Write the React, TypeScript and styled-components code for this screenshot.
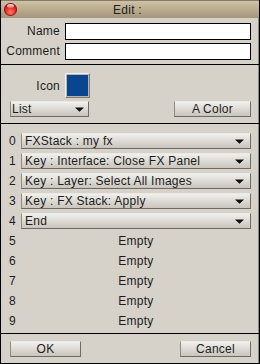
import React from "react";
import styled, { createGlobalStyle } from "styled-components";

const Global = createGlobalStyle`
  html, body { margin: 0; padding: 0; background: #d6d2ca; }
  * { box-sizing: border-box; }
`;

const Window = styled.div`
  width: 260px;
  height: 364px;
  background: #d6d2ca;
  border: 1px solid #000;
  border-top: none;
  box-shadow: inset -1px 0 0 #8f8b84;
  display: flex;
  flex-direction: column;
  font-family: "Liberation Sans", Arial, sans-serif;
  font-size: 12px;
  letter-spacing: 0.25px;
  color: #1c1c1c;
  overflow: hidden;
`;

const TitleBar = styled.div`
  height: 18px;
  flex: none;
  position: relative;
  display: flex;
  align-items: center;
  justify-content: center;
  padding-right: 5px;
  background: linear-gradient(#cfc1a4, #a5967b);
  border-top: 1px solid #85796a;
  color: #222;
  line-height: 16px;
`;

const CloseDot = styled.span`
  position: absolute;
  left: 3px;
  top: 2px;
  width: 13px;
  height: 13px;
  border-radius: 50%;
  background: radial-gradient(circle at 50% 70%, #ff7a6e 0%, #e42a22 45%, #9c1410 100%);
  box-shadow: inset 0 0 0 1px rgba(90, 10, 8, 0.6);
  &::after {
    content: "";
    position: absolute;
    left: 3px;
    top: 1px;
    width: 7px;
    height: 4px;
    border-radius: 50%;
    background: linear-gradient(rgba(255, 255, 255, 0.95), rgba(255, 255, 255, 0.2));
  }
`;

const Section = styled.div<{ $pt: number; $pb: number; $pl: number; $last?: boolean }>`
  flex: none;
  padding: ${(p) => p.$pt}px 8px ${(p) => p.$pb}px ${(p) => p.$pl}px;
  border-bottom: ${(p) => (p.$last ? "none" : "1px solid #000")};
`;

const FormGrid = styled.div`
  display: grid;
  grid-template-columns: 55px 1fr;
  column-gap: 5px;
  row-gap: 3px;
  align-items: center;
`;

const Label = styled.label`
  text-align: right;
  white-space: nowrap;
  line-height: 17px;
`;

const TextField = styled.div`
  height: 17px;
  background: #fff;
  border: 1px solid #000;
`;

const IconRow = styled.div`
  display: flex;
  align-items: center;
  gap: 5px;
  margin-bottom: 3px;
`;

const IconLabel = styled.span`
  width: 50px;
  text-align: right;
`;

const Swatch = styled.div`
  width: 25px;
  height: 25px;
  background: #0a458f;
  border: 1px solid;
  border-color: #f4f3f0 #7d7a74 #7d7a74 #f4f3f0;
  box-shadow: inset 0 0 0 1px #b9b6b0;
`;

const ButtonRow = styled.div`
  display: flex;
  justify-content: space-between;
  align-items: center;
`;

const Bevel = styled.div<{ $w?: number }>`
  height: 16px;
  ${(p) => (p.$w ? `width: ${p.$w}px;` : "")}
  background: linear-gradient(#f0efeb, #c9c5bd);
  border: 1px solid;
  border-color: #ebe9e4 #6e6b66 #6e6b66 #8e8b85;
  line-height: 14px;
  white-space: nowrap;
`;

const Button = styled(Bevel)`
  text-align: center;
`;

const Select = styled(Bevel)<{ $pl: number; $pr: number }>`
  display: flex;
  align-items: center;
  justify-content: space-between;
  padding: 0 ${(p) => p.$pr}px 0 ${(p) => p.$pl}px;
`;

const ListGrid = styled.div`
  display: grid;
  grid-template-columns: 12px 1fr;
  grid-auto-rows: 16px;
  row-gap: 4px;
  align-items: center;
`;

const Index = styled.span`
  line-height: 16px;
`;

const Empty = styled.span`
  text-align: center;
  line-height: 16px;
`;

const Arrow = () => (
  <svg width="9" height="5" viewBox="0 0 9 5">
    <polygon points="0,0.5 9,0.5 4.5,4.8" fill="#111" />
  </svg>
);

const actions = [
  "FXStack : my fx",
  "Key : Interface: Close FX Panel",
  "Key : Layer: Select All Images",
  "Key : FX Stack: Apply",
  "End",
];

export default function App() {
  const rows = Array.from({ length: 10 }, (_, i) => i);
  return (
    <>
      <Global />
      <Window>
        <TitleBar>
          <CloseDot />
          Edit :
        </TitleBar>
        <Section $pt={5} $pb={4} $pl={4}>
          <FormGrid>
            <Label>Name</Label>
            <TextField />
            <Label>Comment</Label>
            <TextField />
          </FormGrid>
        </Section>
        <Section $pt={8} $pb={6} $pl={9}>
          <IconRow>
            <IconLabel>Icon</IconLabel>
            <Swatch />
          </IconRow>
          <ButtonRow>
            <Select $w={79} $pl={1} $pr={4}>
              <span>List</span>
              <Arrow />
            </Select>
            <Button $w={77}>A Color</Button>
          </ButtonRow>
        </Section>
        <Section $pt={9} $pb={4} $pl={8}>
          <ListGrid>
            {rows.map((i) => (
              <React.Fragment key={i}>
                <Index>{i}</Index>
                {i < actions.length ? (
                  <Select $pl={3} $pr={6}>
                    <span>{actions[i]}</span>
                    <Arrow />
                  </Select>
                ) : (
                  <Empty>Empty</Empty>
                )}
              </React.Fragment>
            ))}
          </ListGrid>
        </Section>
        <Section $pt={7} $pb={6} $pl={9} $last>
          <ButtonRow>
            <Button $w={71}>OK</Button>
            <Button $w={71}>Cancel</Button>
          </ButtonRow>
        </Section>
      </Window>
    </>
  );
}
